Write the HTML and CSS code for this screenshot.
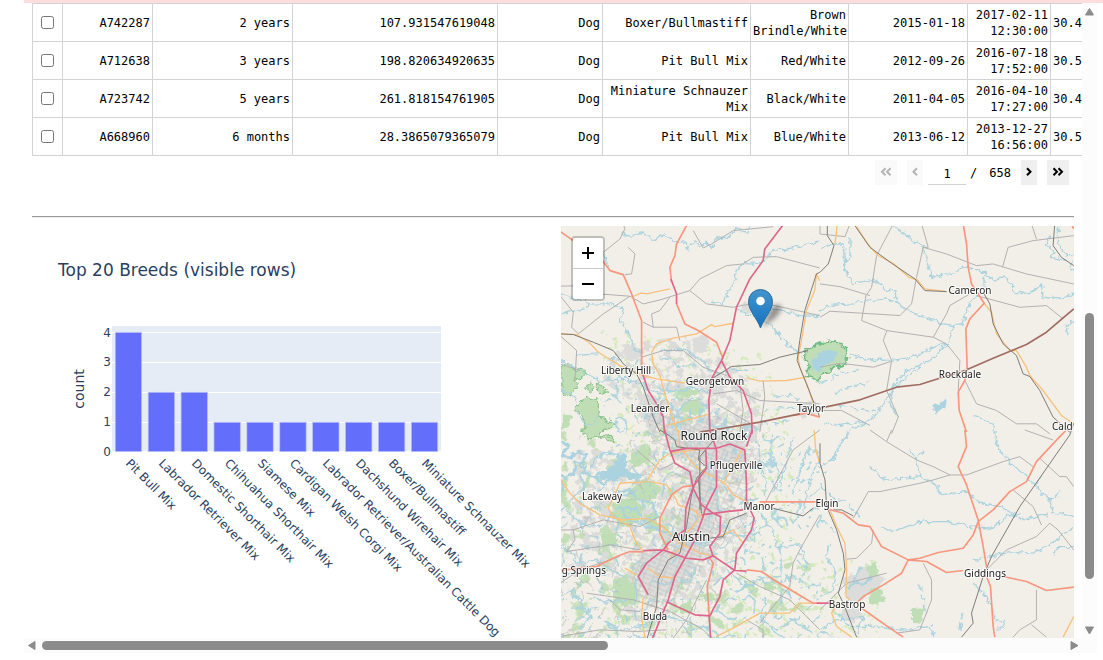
FILE: index.html
```html
<!DOCTYPE html>
<html lang="en">
<head>
<meta charset="utf-8">
<title>Animal shelter dashboard</title>
<link rel="stylesheet" href="styles.css">
</head>
<body>
<div class="accent"></div>
<div class="frame">
<main class="pane">
  <div class="table-wrap">
    <table class="grid">
      <colgroup><col class="w-check"><col class="w-id"><col class="w-age"><col class="w-weeks"><col class="w-type"><col class="w-breed"><col class="w-color"><col class="w-birth"><col class="w-time"><col class="w-lat"></colgroup>
      <tbody>
        <tr><td class="pick"><input type="checkbox" aria-label="Select A742287"></td><td>A742287</td><td>2 years</td><td>107.931547619048</td><td>Dog</td><td>Boxer/Bullmastiff</td><td>Brown Brindle/White</td><td>2015-01-18</td><td>2017-02-11 12:30:00</td><td class="lat">30.4</td></tr>
        <tr><td class="pick"><input type="checkbox" aria-label="Select A712638"></td><td>A712638</td><td>3 years</td><td>198.820634920635</td><td>Dog</td><td>Pit Bull Mix</td><td>Red/White</td><td>2012-09-26</td><td>2016-07-18 17:52:00</td><td class="lat">30.5</td></tr>
        <tr><td class="pick"><input type="checkbox" aria-label="Select A723742"></td><td>A723742</td><td>5 years</td><td>261.818154761905</td><td>Dog</td><td>Miniature Schnauzer Mix</td><td>Black/White</td><td>2011-04-05</td><td>2016-04-10 17:27:00</td><td class="lat">30.4</td></tr>
        <tr><td class="pick"><input type="checkbox" aria-label="Select A668960"></td><td>A668960</td><td>6 months</td><td>28.3865079365079</td><td>Dog</td><td>Pit Bull Mix</td><td>Blue/White</td><td>2013-06-12</td><td>2013-12-27 16:56:00</td><td class="lat">30.5</td></tr>
      </tbody>
    </table>
  </div>
  <nav class="pager" aria-label="Table pages">
    <button class="wide" disabled aria-label="First page"><svg width="12" height="10" viewBox="0 0 12 10"><path d="M5.500 1.200 2 4.700l3.500 3.500M10.500 1.200 7 4.700l3.500 3.500"/></svg></button>
    <button disabled aria-label="Previous page"><svg width="8" height="10" viewBox="0 0 8 10"><path d="M6 1.200 2.500 4.700l3.500 3.500"/></svg></button>
    <div class="page-number"><input type="text" value="1" aria-label="Current page"><span>/</span><span class="last">658</span></div>
    <button aria-label="Next page"><svg width="8" height="10" viewBox="0 0 8 10"><path d="M2 1.200l3.500 3.500L2 8.200"/></svg></button>
    <button class="wide" aria-label="Last page"><svg width="12" height="10" viewBox="0 0 12 10"><path d="M1.500 1.200 5 4.700 1.500 8.200M6.500 1.200 10 4.700 6.500 8.200"/></svg></button>
  </nav>
  <hr>
  <div class="panels">
    <section class="chart">
      <svg viewBox="32 226 521 412" preserveAspectRatio="xMinYMin meet" role="img" aria-label="Top 20 Breeds">
        <text class="chart-title" x="58" y="276">Top 20 Breeds (visible rows)</text>
        <rect x="112" y="326" width="329" height="126" fill="#e5ecf6"/>
        <path d="M112 332.500H441M112 362.500H441M112 392.500H441M112 422.500H441M112 451.500H441" stroke="#fff"/>
        <g fill="#636efa" stroke="#b5bcf9" stroke-width=".7">
          <rect x="115.300" y="332.500" width="26.300" height="119"/><rect x="148.200" y="392.300" width="26.300" height="59.200"/><rect x="181.100" y="392.300" width="26.300" height="59.200"/><rect x="214" y="422.300" width="26.300" height="29.200"/><rect x="246.900" y="422.300" width="26.300" height="29.200"/><rect x="279.800" y="422.300" width="26.300" height="29.200"/><rect x="312.700" y="422.300" width="26.300" height="29.200"/><rect x="345.600" y="422.300" width="26.300" height="29.200"/><rect x="378.500" y="422.300" width="26.300" height="29.200"/><rect x="411.400" y="422.300" width="26.300" height="29.200"/>
        </g>
        <g class="tick" text-anchor="end"><text x="111" y="337">4</text><text x="111" y="366">3</text><text x="111" y="396">2</text><text x="111" y="426">1</text><text x="111" y="456">0</text></g>
        <text class="axis" transform="translate(84 389) rotate(-90)" text-anchor="middle">count</text>
        <g class="tick">
          <text transform="translate(125 464) rotate(45)">Pit Bull Mix</text>
          <text transform="translate(158 464) rotate(45)">Labrador Retriever Mix</text>
          <text transform="translate(191 464) rotate(45)">Domestic Shorthair Mix</text>
          <text transform="translate(224 464) rotate(45)">Chihuahua Shorthair Mix</text>
          <text transform="translate(257 464) rotate(45)">Siamese Mix</text>
          <text transform="translate(289 464) rotate(45)">Cardigan Welsh Corgi Mix</text>
          <text transform="translate(322 464) rotate(45)">Labrador Retriever/Australian Cattle Dog</text>
          <text transform="translate(355 464) rotate(45)">Dachshund Wirehair Mix</text>
          <text transform="translate(388 464) rotate(45)">Boxer/Bullmastiff</text>
          <text transform="translate(421 464) rotate(45)">Miniature Schnauzer Mix</text>
        </g>
      </svg>
    </section>
    <section class="map">
      <svg class="tiles" viewBox="561 226 513 412" preserveAspectRatio="xMinYMin slice" role="img" aria-label="Map of the Austin area">
        <defs>
          <filter id="rough" x="-5%" y="-5%" width="110%" height="110%"><feTurbulence type="fractalNoise" baseFrequency=".15" numOctaves="3" seed="3"/><feDisplacementMap in="SourceGraphic" scale="8" xChannelSelector="R" yChannelSelector="G"/></filter>
          <filter id="wiggle" x="-5%" y="-5%" width="110%" height="110%"><feTurbulence type="fractalNoise" baseFrequency=".18" numOctaves="2" seed="8"/><feDisplacementMap in="SourceGraphic" scale="7" xChannelSelector="R" yChannelSelector="G"/></filter>
          <filter id="woods" color-interpolation-filters="sRGB"><feTurbulence type="fractalNoise" baseFrequency=".07" numOctaves="4" seed="12"/><feColorMatrix values="0 0 0 0 .77 0 0 0 0 .87 0 0 0 0 .72 12 0 0 0 -7"/><feComposite operator="in" in2="SourceGraphic"/></filter>
          <filter id="lawns" color-interpolation-filters="sRGB"><feTurbulence type="fractalNoise" baseFrequency=".16" numOctaves="3" seed="31"/><feColorMatrix values="0 0 0 0 .84 0 0 0 0 .92 0 0 0 0 .74 0 12 0 0 -7.500"/><feComposite operator="in" in2="SourceGraphic"/></filter>
          <filter id="blocks" color-interpolation-filters="sRGB"><feTurbulence type="fractalNoise" baseFrequency=".12" numOctaves="4" seed="5"/><feColorMatrix values="0 0 0 0 .86 0 0 0 0 .86 0 0 0 0 .85 0 0 12 0 -6"/><feComposite operator="in" in2="SourceGraphic"/></filter>
          <filter id="creeks" color-interpolation-filters="sRGB"><feTurbulence type="turbulence" baseFrequency=".055" numOctaves="2" seed="17"/><feColorMatrix values="0 0 0 0 .67 0 0 0 0 .83 0 0 0 0 .87 -22 0 0 0 2.200"/><feComposite operator="in" in2="SourceGraphic"/></filter>
          <filter id="lanes" color-interpolation-filters="sRGB"><feTurbulence type="turbulence" baseFrequency=".06" numOctaves="2" seed="44"/><feColorMatrix values="0 0 0 0 .73 0 0 0 0 .73 0 0 0 0 .73 0 -22 0 0 1.700"/><feComposite operator="in" in2="SourceGraphic"/></filter>
          <linearGradient id="pin" x2="0" y2="1"><stop stop-color="#4295ce"/><stop offset="1" stop-color="#1672bf"/></linearGradient>
          <filter id="soft" x="-50%" y="-50%" width="200%" height="200%"><feGaussianBlur stdDeviation="2.500"/></filter>
          <pattern id="streets" width="9" height="9" patternUnits="userSpaceOnUse" patternTransform="rotate(22)"><path d="M0 2H9M3 0V9M3 6h6" fill="none" stroke="#b9b9b9" stroke-width=".6"/></pattern>
        </defs>
        <rect x="561" y="226" width="513" height="412" fill="#f2efe9"/>

        <path filter="url(#woods)" d="M561 430 600 440 640 450 650 400 680 385 700 420 720 450 690 500 665 560 700 590 760 570 800 560 830 570 830 600 800 620 760 638H561Z"/>
        <path filter="url(#lawns)" d="M600 330 760 350 790 420 800 560 880 560 880 638H600L620 500Z"/>
        <path filter="url(#blocks)" d="M620 345 690 335 730 365 765 395 760 470 750 500 745 540 720 580 670 625 630 620 600 560 570 540 575 450 625 450 655 440 630 400 600 380Z"/>
        <g filter="url(#rough)" fill="#dcdcda">
          <path d="M640 395l20 2 5 25-12 12-15-18ZM665 432l35-8 42 10 5 25-20 14-25-10-22-8ZM688 470l25-2 5 40-8 35-15 15-20-5 2-20 15-40ZM640 552l45-3 10 18-25 25-20 5-15-15ZM842 578l24-10 20 10-12 16-26 10ZM845 602l18 10-8 14-14-8ZM700 377l20-3 8 14-18 12ZM620 353l13-10 8 11-10 10ZM692 338l18-4-4 17-12 3ZM570 565l14-6 6 10-14 8ZM740 305l12-6 5 8-10 8ZM799 400l18 3-2 12-15 2Z"/>
        </g>
        <path fill="url(#streets)" d="M645 415 655 404 700 415 750 420 753 450 735 500 720 545 690 590 655 610 625 585 635 555 660 550 680 500 685 465 655 440Z"/>
        <g filter="url(#rough)" fill="#c0deb5">
          <g stroke="#80bf83" stroke-width="3" transform="translate(561 340) scale(.333)"><path d="M0 85 15 70 35 80 40 95 70 85 75 105 55 120 40 115 50 145 20 165 0 150ZM65 180 75 165 108 185 110 205 120 235 165 250 145 265 120 270 115 285 155 290 160 305 135 300 110 285 80 295 65 270 75 250 45 205ZM75 140 90 125 100 140 90 155ZM110 130 130 135 140 155 120 165 105 150Z"/></g>
          <path d="M805 352l10-6 14-6 7 4 10 3 2 9-4 9-12 3-14 12-12-4 4-11-6-4Z" stroke="#6fbb83" stroke-width="1.500"/>
          <path d="M561 412l11 4-5 12-6 1ZM676 390l12-3 13 5-10 5-13-1ZM683 403l15-5 7 14-10 5-13-7ZM630 455l12-10 8 2-1 14-14 7-7-7ZM582 487l6-14 4 2-6 16ZM628 490l16-10 17 6-4 12-18 4-12-5ZM612 503l18-6 14 10-6 16-16 5-10-12ZM600 535l15-3 2 12-13 4ZM613 580l15-6 9 18-5 15-19-3ZM645 515l10-4 5 18-12 4ZM680 605l10-3 2 10-12 2ZM767 583l9-3-3 10-9-2ZM866 565l10-4 3 14-9 2ZM912 608l12-1-2 18-10-2ZM870 590l10-2 5 12-14 4ZM701 595l10-4 5 8-10 4Z"/>
        </g>

        <path filter="url(#creeks)" opacity=".9" d="M561 480 625 440 600 400 630 350 690 390 760 430 825 450 830 520 800 540 835 638H561Z"/>
        <path filter="url(#lanes)" opacity=".55" d="M561 540 620 480 640 390 740 380 770 430 750 560 690 638H561Z"/>
        <g filter="url(#wiggle)" fill="none" stroke="#aad3df" stroke-width="4" stroke-linejoin="round">
          <g transform="translate(560 224) scale(.333)">
            <path d="M185 25 210 38 250 25 285 50 310 30 345 50 375 55 385 78 400 52 425 68 440 55 455 72 470 40 500 45 530 15 560 25 570 8"/>
            <path d="M0 210 50 228 70 222 90 240 150 240 190 255 182 290 205 330 220 375 245 385M90 75 100 105 130 90 145 130M0 270 70 255 90 240M50 395 110 390M640 80 700 72 780 50M640 80 600 120 550 115 530 140 520 185 500 210 492 240 455 235M530 255 600 285 640 310 670 350 720 390M570 220 640 250 720 275 780 278M300 380 370 375 430 410 450 440 480 450 520 435 560 440M0 410 60 440 120 470 200 460 250 490 300 510 360 500 400 490 450 510"/>
            <path d="M640 520 690 515 720 525M610 560 680 550 730 560M600 590 650 600 700 585" stroke-dasharray="25 9"/>
            <path d="M755 408l12-6 12-16 32-8 20 14-8 20-25 10-20 18-22-2 8-14Z" fill="#aad3df" stroke-width="1"/>
          </g>
          <g transform="translate(561 340) scale(.333)">
            <path d="M0 302 22 318 5 345 25 355 48 335 75 345 68 365 45 370 38 400 12 415 0 405M75 345 60 378 72 400 100 410 128 435 150 415 160 385" stroke-width="8"/>
            <path d="M92 385 100 360 128 340 155 345M45 205 75 255 100 250 115 225M140 60 180 55M300 60 330 55 350 80 400 75 410 50M165 240 170 280 190 270M0 150 35 165 50 190"/>
            <path d="M110 405 150 385 165 370 170 345 195 345 190 380 205 400 240 405 225 418 185 408 160 420 135 418Z" fill="#aad3df"/>
          </g>
          <g transform="translate(820 224) scale(.333)">
            <path d="M220 5 270 40 310 70 325 130 335 160 400 150 430 130 480 140 500 150 520 170 555 155 590 210 640 205 665 180 670 220 720 225 762 210M490 150 495 200 460 225 435 270 430 300 405 305 385 355 320 380 280 400 225 408 150 410 90 390M0 75 30 60 70 60 75 140 100 180 160 165 200 200 225 200 230 230 270 265 340 290 370 300 405 305M90 40 90 100 70 120 85 150M0 265 20 245 100 240 150 230 200 225 240 240"/>
            <path d="M385 355 330 410 260 440 225 480 200 530 170 570 130 600 80 625M300 430 220 490 210 540 235 580M720 5 712 55 740 90 762 95M690 35 680 60 700 80 695 100 740 110M10 600 60 605 130 595M465 575 520 600 530 630M762 110 750 130 762 140M762 290 735 310M745 310 740 335"/>
            <path d="M45 510 80 490 150 475M55 545 140 560 170 560M0 480 60 450 120 440" stroke-dasharray="25 9"/>
            <path d="M340 545 360 545 375 530 372 550 345 570Z" fill="#aad3df"/>
          </g>
          <g transform="translate(560 430) scale(.333)">
            <path d="M160 190 210 180 240 210 280 220 290 260 250 275 235 240 180 230 200 265 260 290 330 310 370 320 400 340 450 335 500 310 555 320 600 310" stroke-width="6"/>
            <path d="M530 260 560 290 590 270 570 330 540 330M590 30 600 100 620 160 610 200M640 10 630 70 660 130 640 190M700 20 680 90 660 170M740 60 720 130 700 190M770 100 750 160 730 240 700 280M600 250 640 300 650 350 720 345 740 400M500 420 560 470 620 440 660 460 700 440 750 470 780 465M0 350 40 370 50 400 110 390 150 420 200 440M0 500 40 480 60 520 90 560 60 600M100 500 140 520 200 510M180 600 250 590 300 560 370 570 400 600 450 590M620 500 600 570 650 600 700 570 760 610M50 210 90 240 130 220M20 240 80 290 130 280"/>
          </g>
          <g transform="translate(820 430) scale(.333)">
            <path d="M520 0 540 60 580 110 620 140 650 170 690 210 700 250 762 258M145 110 200 150 300 140 350 165 360 195 440 185 480 220 550 235 610 270 690 250M180 290 220 305 300 275 380 275 450 290 520 295 560 260 600 250M460 395 500 380 590 365 640 370 700 340 720 320 762 295M650 165 665 140M690 210 725 185M270 60 290 90 310 60M290 90 300 140M700 380 715 350 762 350M460 460 490 490 510 520 530 575 555 570 550 595 530 595M0 110 40 90 60 40 90 10M0 500 40 480 50 420 15 380 30 340M0 600 50 570 130 560 110 610M40 540 90 590 180 590 250 600 330 590 345 622"/>
            <path d="M300 460 310 510 320 560M430 545 420 600M30 90 60 60M0 170 50 210 80 215 120 260M0 270 50 310" stroke-dasharray="25 9"/>
            <path d="M85 480 110 440 120 410M90 460 130 465 155 440" stroke-width="6"/>
          </g>
        </g>

        <g fill="none" stroke="#b2b1b1" stroke-width="3" stroke-linejoin="round">
          <g transform="translate(560 224) scale(.333)"><path d="M130 85 180 45 195 15 190 0M205 70 225 90 215 150 195 152M400 20 430 72 455 60 520 20 640 8M0 187 60 185 120 210 210 217M210 217 250 240 300 228 390 200 420 165 500 125 550 120 580 100 650 98 780 132M390 200 440 240 520 250 600 235 780 275M0 215 40 265 35 310 55 330 130 270 210 217M330 220 300 260 275 270 280 310 250 295M280 310 350 310 360 350M0 335 50 380 45 470M245 400 310 380 370 380 430 430 500 455M0 420 60 440M610 470 615 520 600 625M460 510 530 500 600 530 780 540M540 480 550 560 540 625M470 540 590 610"/></g>
          <g transform="translate(820 224) scale(.333)"><path d="M0 0 0 30 75 38 90 0M220 0 170 95 155 190 138 215 125 290M0 180 60 188 150 215M0 280 30 262 240 275 275 240 290 160 310 70 380 90 470 125 520 120 620 150 762 180M310 70 325 70 305 0M548 130 565 70 640 50 762 35M635 0 650 45M470 215 600 250 680 245 730 285M125 290 200 320 340 340 380 360 420 410 415 500M340 340 380 270 390 245 450 210M200 322 190 350 215 410 200 500M0 430 60 418 160 430 215 412M200 500 235 580 215 630M0 560 65 560 150 605M435 470 470 540 530 560 590 600 650 600 690 630"/></g>
          <g transform="translate(560 430) scale(.333)"><path d="M0 300 40 300 130 270 240 290 300 260M40 300 45 330 20 365 150 345 240 360M0 460 60 420 180 380M80 490 220 510 330 545 430 600 450 620M610 230 700 60 780 0M780 255 720 360 700 400 690 470 640 530 600 580M530 430 600 470 690 510 780 600M150 510 180 540 240 545M440 450 380 570 340 625M0 620 120 600 230 605 320 600M610 625 610 600 560 570M500 320 470 330M230 60 300 120 340 100"/></g>
          <g transform="translate(820 430) scale(.333)"><path d="M150 0 200 35 290 90 340 110 390 135 440 135 550 95 600 80 640 110M200 35 215 0M100 265 145 185 180 185 300 160 340 150 390 135M80 388 110 385 155 340 160 300M310 400 335 450 335 510 300 600 230 610M580 180 640 230 665 285M500 420 560 360 650 320 690 280 715 300 762 360M650 480 650 570 600 600 580 622M635 585 680 622M660 85 720 140 740 140 762 170M615 0 700 30M0 540 40 500 80 460 200 430"/></g>
        </g>

        <g fill="none" stroke="#f8c27c" stroke-width="4" stroke-linejoin="round">
          <g transform="translate(560 224) scale(.333)"><path d="M220 217 245 207 260 210 330 195M0 330 50 332 90 358 115 385 180 425 250 455 290 465 375 478M520 298 465 308 455 302 410 330 340 343 290 360 275 385 280 420 300 455 315 510 340 590 355 625M780 170 770 150 765 200 740 260 725 350 715 400 720 430 745 490 760 540M560 462 600 472 680 470 740 460M320 605 360 595 450 570"/></g>
          <g transform="translate(820 224) scale(.333)"><path d="M52 0 45 60M110 8 142 58 172 93 222 120 267 160 292 168 315 195 380 203M490 235 515 265 530 330 570 380 590 380 620 430 630 455 670 500 725 575 762 600"/></g>
          <g transform="translate(560 430) scale(.333)"><path d="M355 0 360 50 390 90 420 120 470 145 500 165 520 195 560 215M0 145 30 190 60 220 120 255 190 270 260 265 310 290 360 340 420 370 470 380M145 235 180 160 260 155 300 90 330 70 440 55M270 155 320 165 350 210 355 225 400 240 425 260M145 235 160 260 210 290 225 330 250 365M265 415 300 440 345 445M195 415 230 435M410 240 415 270 380 310 370 350 330 380M480 320 520 300 550 340M250 500 245 560 255 625M470 620 520 595 600 550 690 550 720 520 755 520M490 160 520 110 550 50M763 0 768 60 780 100"/></g>
          <g transform="translate(820 430) scale(.333)"><path d="M30 240 50 290 75 340 80 420 78 500 90 510M55 515 35 550 50 590 95 622M762 560 730 622"/></g>
        </g>

        <g fill="none" stroke="#807a74" stroke-width="3" stroke-linejoin="round">
          <g transform="translate(560 224) scale(.333)"><path d="M0 330 40 332 100 355 160 380 190 420 230 450 250 490 280 580 300 625M455 465 515 428 600 422 660 400 745 380M780 145 770 150 735 260 720 350 712 410 740 480 780 580"/></g>
          <g transform="translate(820 224) scale(.333)"><path d="M22 0 22 35 42 65 25 120 0 145M105 5 150 70 215 118 285 165 315 200 380 203M490 205 510 240 520 300 550 360 590 395 610 450 630 458 660 500 700 580 750 625M705 0 700 65 725 100 762 125"/></g>
          <g transform="translate(560 430) scale(.333)"><path d="M300 0 325 15 345 30 350 50 420 60 415 90 440 110 410 145 395 195 380 290 360 370 325 390 295 450 290 530 262 625M470 20 420 80 420 240M640 235 730 258 760 235M450 325 490 320 510 270 560 250M415 140 425 250"/></g>
          <g transform="translate(820 430) scale(.333)"><path d="M0 100 15 150 20 230 50 300 70 370 75 420 55 490 70 520 110 622M762 -20 750 15 600 230 515 380 490 440 455 550 460 580 425 622M40 240 65 240 100 258M0 40 0 100"/></g>
        </g>

        <g fill="none" stroke="#f9967d" stroke-width="5" stroke-linejoin="round">
          <g transform="translate(560 224) scale(.333)"><path d="M0 22 40 50 120 100 150 140 190 152 215 210 245 290 245 425 248 455M380 5 350 60 345 95 330 130 335 175M350 240 375 300 415 320 470 355 490 405M700 575 740 568 780 580" /></g>
          <g transform="translate(820 224) scale(.333)"><path d="M430 0 440 60 445 130 455 180 475 210 493 238 450 285 438 315 442 435 435 470 415 505 418 560 440 625M755 0 762 15"/></g>
          <g transform="translate(560 430) scale(.333)"><path d="M395 168 370 170 335 195 300 265 300 310 325 360M0 422 60 415 110 410 170 380 210 365 250 366M450 385 460 400 442 470 448 560M560 420 605 425 650 455 760 520 780 520M600 216 780 216"/></g>
          <g transform="translate(820 430) scale(.333)"><path d="M435 0 440 50 415 110 440 165 475 270 490 350 500 410M25 238 70 250 115 285 150 290 185 350 265 390 245 430 190 465 130 500 110 520M265 390 300 385 355 368 430 355 460 315 475 275 520 240 570 185 620 155 650 95 720 20 740 0M265 390 320 395 380 428 430 422M550 440 620 455 680 482 762 472M500 440 512 470 520 590 525 622M125 535 160 560 210 595 250 622"/></g>
        </g>
        <g fill="none" stroke="#a06c60" stroke-width="5" stroke-linejoin="round">
          <g transform="translate(560 224) scale(.333)"><path d="M420 625 500 612 600 595 720 570"/></g>
          <g transform="translate(820 224) scale(.333)"><path d="M0 553 120 528 230 490 300 482 350 466 435 440 520 403 620 362 680 325 762 255"/></g>
        </g>
        <g fill="none" stroke="#de668b" stroke-width="5" stroke-linejoin="round">
          <g transform="translate(560 224) scale(.333)"><path d="M668 5 615 75 610 110 570 165 530 250 510 350 485 410 455 465 447 530 450 625M333 165 350 210 350 240M485 410 510 460 550 500 575 570 577 630M248 450 265 500 290 540 310 580 314 630"/></g>
          <g transform="translate(560 430) scale(.333)"><path d="M314 0 330 60 345 100 390 125 400 175 425 225 460 250 482 260 480 310 450 350 460 380M330 65 380 55 470 55 510 42 555 60 560 160 560 215 583 265 575 300 530 370 525 420M577 0 560 50M450 0 470 60 470 170 435 240 430 260 400 340 345 440 325 510 278 625M438 60 440 115 400 170 378 235 375 300 325 340 310 360 250 362M310 360 380 385 430 390 460 378 525 422 560 424M310 360 260 400 235 440 265 495M425 255 500 245 550 240M325 518 405 555 450 558 480 500 490 450 525 420M448 555 452 625"/></g>
          <g transform="translate(820 430) scale(.333)"><path d="M-10 520 30 520" /></g>
        </g>

        <g class="places" text-anchor="middle">
          <text x="626" y="374">Liberty Hill</text><text x="715" y="385">Georgetown</text><text x="650" y="412">Leander</text><text x="811" y="412">Taylor</text><text x="970" y="294">Cameron</text><text x="960" y="378">Rockdale</text><text x="736" y="469">Pflugerville</text><text x="602" y="500">Lakeway</text><text x="759" y="510">Manor</text><text x="827" y="507">Elgin</text><text x="985" y="577">Giddings</text><text x="847" y="608">Bastrop</text><text x="655" y="620">Buda</text>
          <text text-anchor="start" x="1052" y="430">Cald</text><text text-anchor="end" x="606" y="574">g Springs</text>
          <text class="town" x="714" y="440">Round Rock</text><text class="city" x="691" y="541">Austin</text>
        </g>
        <path d="M762 327 772 307q12-7 8 5-5 8-18 15Z" opacity=".4" filter="url(#soft)"/>
        <path d="M760.500 328C757 318 748.500 311 748.500 301.500a12 12 0 0 1 24 0C772.500 311 764 318 760.500 328Z" fill="url(#pin)" stroke="#2e6c97"/>
        <circle cx="760.500" cy="301" r="4.300" fill="#fff"/>
      </svg>
      <div class="zoom">
        <button aria-label="Zoom in"><svg width="14" height="14" viewBox="0 0 14 14"><path d="M7 1V13M1 7H13"/></svg></button>
        <button aria-label="Zoom out"><svg width="14" height="14" viewBox="0 0 14 14"><path d="M1 7H13"/></svg></button>
      </div>
    </section>
  </div>
</main>
<div class="vbar"><svg width="15" height="18" viewBox="0 0 15 18"><path d="M7.500 5.500 11.500 12h-8Z"/></svg><div class="vtrack"><div class="vthumb"></div></div><svg width="15" height="15" viewBox="0 0 15 15"><path d="M7.500 11 11.500 4h-8Z"/></svg></div>
<div class="hbar"><svg width="18" height="15" viewBox="0 0 18 15"><path d="M4.500 7.500 11 3.500v8Z"/></svg><div class="htrack"><div class="hthumb"></div></div><svg width="15" height="15" viewBox="0 0 15 15"><path d="M11 7.500 4 3.500v8Z"/></svg></div>
<div class="corner"></div>
</div>
</body>
</html>
```

FILE: styles.css
```css
* { box-sizing: border-box; }
body {
  margin: 0;
  min-height: 100vh;
  display: flex;
  flex-direction: column;
  background: #fff;
  color: #000;
  font-family: "DejaVu Sans", sans-serif;
}
.accent { height: 3px; margin-left: 24px; background: #fdd; }
.frame {
  flex: 1;
  display: grid;
  grid-template-columns: minmax(0, 1fr) 15px;
  grid-template-rows: 1fr 15px;
  padding: 0 6px 7px 24px;
}
.pane {
  padding: 0 8px;
  overflow: hidden;
  display: flex;
  flex-direction: column;
}
.table-wrap { margin-right: -8px; overflow: hidden; }
.grid {
  width: 1138px;
  table-layout: fixed;
  border-collapse: collapse;
  font: 12px/16px "DejaVu Sans Mono", monospace;
}
.grid td {
  height: 38px;
  padding: 0 2px;
  border: 1px solid #d3d3d3;
  text-align: right;
  vertical-align: middle;
}
.grid .pick { text-align: center; }
.grid .lat { text-align: left; }
.pick input { display: block; width: 13px; height: 13px; margin: 0 auto; }
.w-check { width: 30px; }
.w-id { width: 90px; }
.w-age { width: 140px; }
.w-weeks { width: 205px; }
.w-type { width: 105px; }
.w-breed { width: 148px; }
.w-color { width: 98px; }
.w-birth { width: 119px; }
.w-time { width: 83px; }
.w-lat { width: 120px; }

.pager {
  display: flex;
  justify-content: flex-end;
  gap: 10px;
  padding: 4px 5px 0 0;
  font: 12px/26px "DejaVu Sans Mono", monospace;
}
.pager button {
  display: flex;
  align-items: center;
  justify-content: center;
  width: 16px;
  height: 25px;
  padding: 0 0 1px;
  border: 0;
  background: #efefef;
}
.pager .wide { width: 22px; }
.pager button:disabled { background: #fafafa; }
.pager path { fill: none; stroke: #000; stroke-width: 2; }
.pager button:disabled path { stroke: #b5b5b5; }
.page-number { display: flex; gap: 4px; height: 25px; margin-left: -5px; }
.page-number input {
  width: 38px;
  height: 25px;
  padding: 4px 0 0;
  border: 0;
  border-bottom: 1px solid #d3d3d3;
  background: none;
  font: inherit;
  line-height: 20px;
  text-align: center;
}
.last { margin-left: 8px; }
hr {
  width: 100%;
  margin: 31px 0 8px;
  border: 0;
  border-top: 1px solid #999;
  border-bottom: 1px solid #eee;
}
.panels { flex: 1; display: grid; grid-template-columns: 1fr 1fr; min-height: 0; }
.chart svg { display: block; width: 100%; }
.chart text { fill: #2a3f5f; }
.chart-title { font-size: 17px; }
.axis { font-size: 14px; }
.tick { font-size: 12px; }
.map { position: relative; margin-left: 8px; overflow: hidden; background: #f2efe9; }
.tiles { display: block; width: 100%; height: 100%; }
.places {
  font-family: "Noto Sans", sans-serif;
  font-size: 10px;
  fill: #222;
  stroke: #fffc;
  stroke-width: 2px;
  stroke-linejoin: round;
  paint-order: stroke;
}
.town { font-size: 12px; }
.city { font-size: 13px; }
.zoom {
  position: absolute;
  top: 10px;
  left: 10px;
  border: 2px solid #0003;
  border-radius: 4px;
  background-clip: padding-box;
}
.zoom button {
  display: grid;
  place-items: center;
  width: 30px;
  height: 30px;
  padding: 0;
  border: 0;
  background: #fff;
}
.zoom button:first-child { height: 31px; border-bottom: 1px solid #ccc; border-radius: 2px 2px 0 0; }
.zoom button:last-child { border-radius: 0 0 2px 2px; }
.zoom path { stroke: #000; stroke-width: 2; }
.vbar, .hbar, .corner { background: #fcfcfc; }
.vbar path, .hbar path { fill: #8b8b8b; stroke: #8b8b8b; stroke-linejoin: round; }
.vbar, .hbar { display: flex; }
.vbar { flex-direction: column; }
.vbar svg, .hbar svg { flex: none; display: block; }
.vtrack { flex: 1; display: grid; grid-template-rows: 292fr 266fr 44fr; }
.vthumb { grid-row: 2; width: 9px; margin: 0 auto; border-radius: 5px; background: #8b8b8b; }
.htrack { flex: 1; display: grid; grid-template-columns: 566fr 459fr; }
.hthumb { height: 9px; margin: 3px 0; border-radius: 5px; background: #8b8b8b; }
```
